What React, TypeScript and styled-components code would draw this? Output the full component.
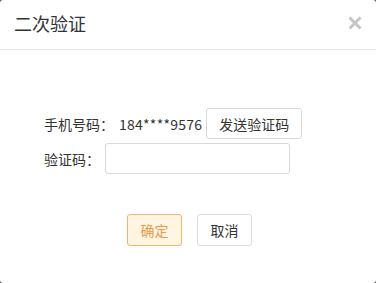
import React from "react";
import styled, { createGlobalStyle } from "styled-components";

const Global = createGlobalStyle`
  html, body { margin: 0; padding: 0; background: #4a4a4a; }
  body { font-family: "Microsoft YaHei", "Noto Sans CJK SC", sans-serif; }
  * { box-sizing: border-box; }
`;

const Dialog = styled.div`
  width: 376px;
  height: 283px;
  background: #fff;
  border-radius: 3px;
  display: flex;
  flex-direction: column;
  overflow: hidden;
`;

const Header = styled.div`
  height: 50px;
  border-bottom: 1px solid #e5e5e5;
  display: flex;
  align-items: center;
  justify-content: space-between;
  padding: 0 13px 4px 14px;
`;

const Title = styled.div`
  font-size: 18px;
  color: #333;
  line-height: 24px;
`;

const Close = styled.button`
  border: none;
  background: none;
  padding: 0;
  width: 16px;
  height: 16px;
  display: flex;
  cursor: pointer;
`;

const Body = styled.div`
  padding: 58px 0 0 44px;
  display: flex;
  flex-direction: column;
  gap: 4px;
`;

const Row = styled.div`
  display: flex;
  align-items: center;
  gap: 4px;
  font-size: 14px;
  color: #333;
`;

const Label = styled.span`
  white-space: nowrap;
  margin-right: 1px;
`;

const Value = styled.span`
  white-space: nowrap;
  letter-spacing: 0.25px;
`;

const PlainButton = styled.button`
  height: 31px;
  padding: 0 12px;
  font-family: inherit;
  font-size: 14px;
  color: #333;
  background: #fff;
  border: 1px solid #d9d9d9;
  border-radius: 3px;
  cursor: pointer;
`;

const Input = styled.input`
  width: 185px;
  height: 31px;
  border: 1px solid #d9d9d9;
  border-radius: 3px;
  padding: 0 8px;
  font-size: 14px;
  outline: none;
`;

const Footer = styled.div`
  display: flex;
  justify-content: center;
  gap: 15px;
  margin-top: 40px;
  padding-left: 3px;
`;

const ActionButton = styled.button<{ $primary?: boolean }>`
  width: 55px;
  height: 32px;
  font-family: inherit;
  font-size: 14px;
  border-radius: 3px;
  cursor: pointer;
  color: ${(p) => (p.$primary ? "#ec9a4f" : "#333")};
  background: ${(p) => (p.$primary ? "#fff5e1" : "#fff")};
  border: 1px solid ${(p) => (p.$primary ? "#f2b37a" : "#dcdcdc")};
`;

export default function App() {
  return (
    <>
      <Global />
      <Dialog>
        <Header>
          <Title>二次验证</Title>
          <Close aria-label="close">
            <svg width="16" height="16" viewBox="0 0 16 16">
              <path d="M2.5 2.5 L13.5 13.5 M13.5 2.5 L2.5 13.5" stroke="#c6c6c6" strokeWidth="3" strokeLinecap="butt" />
            </svg>
          </Close>
        </Header>
        <Body>
          <Row>
            <Label>手机号码：</Label>
            <Value>184****9576</Value>
            <PlainButton>发送验证码</PlainButton>
          </Row>
          <Row>
            <Label>验证码：</Label>
            <Input />
          </Row>
        </Body>
        <Footer>
          <ActionButton $primary>确定</ActionButton>
          <ActionButton>取消</ActionButton>
        </Footer>
      </Dialog>
    </>
  );
}
